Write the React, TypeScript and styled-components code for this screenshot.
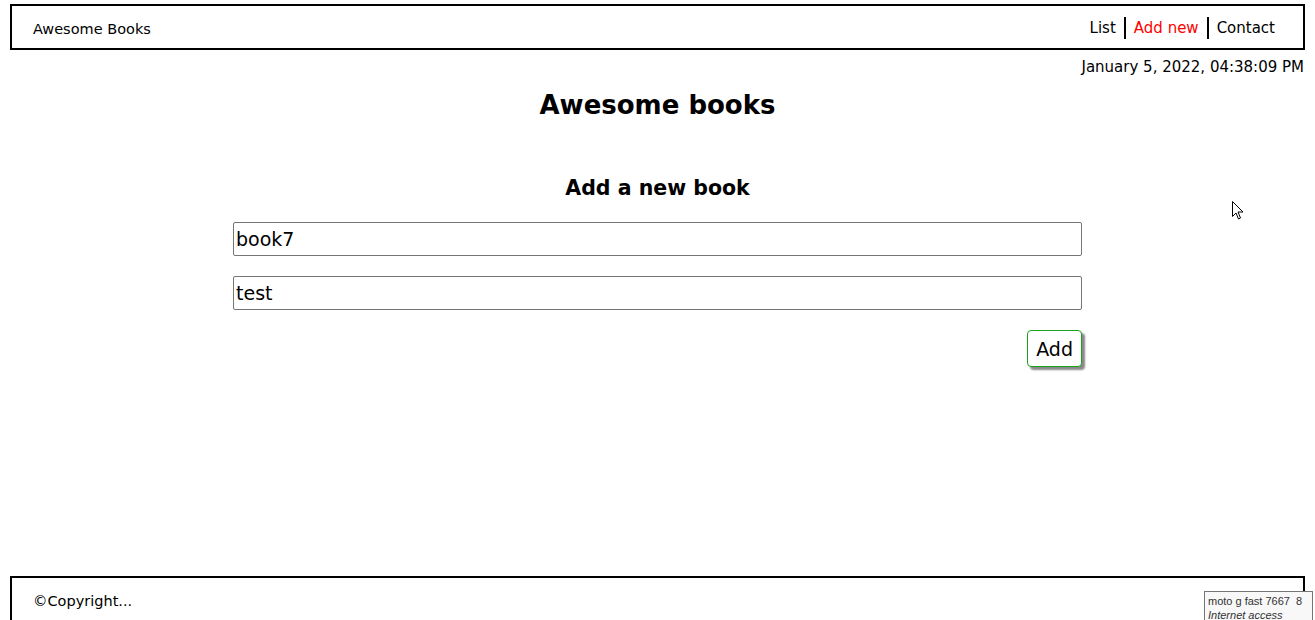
import React from 'react';
import styled, { createGlobalStyle } from 'styled-components';

const GlobalStyle = createGlobalStyle`
  html, body {
    margin: 0;
    padding: 0;
    background: #fff;
    overflow: hidden;
  }

  body {
    font-family: 'Comic Sans MS', 'DejaVu Sans', sans-serif;
    color: #000;
  }
`;

const Page = styled.div`
  height: 100vh;
  display: flex;
  flex-direction: column;
  padding: 4px 10px 0;
  box-sizing: border-box;
  position: relative;
`;

const Bar = styled.div`
  display: flex;
  align-items: center;
  justify-content: space-between;
  height: 46px;
  box-sizing: border-box;
  border: 2px solid #000;
  padding: 3px 28px 0 21px;
  font-size: 15px;
`;

const Brand = styled.span`
  font-size: 14.5px;
`;

const Nav = styled.nav`
  display: flex;
  align-items: center;
  margin-top: -1px;
`;

const NavLink = styled.a<{ $active?: boolean }>`
  color: ${(p) => (p.$active ? '#f00' : '#000')};
  text-decoration: none;
  padding: 0 8px;
  line-height: 22px;
  border-left: 2px solid #000;

  &:first-child {
    border-left: none;
  }

  &:last-child {
    padding-right: 0;
  }
`;

const Clock = styled.div`
  text-align: right;
  font-size: 15px;
  margin-top: 8px;
  padding-right: 1px;
`;

const Main = styled.main`
  flex: 1;
  display: flex;
  flex-direction: column;
  align-items: center;
`;

const Title = styled.h1`
  font-size: 26px;
  font-weight: bold;
  margin: 9px 0 0;
  line-height: 40px;
`;

const SubTitle = styled.h2`
  font-size: 20.5px;
  font-weight: bold;
  margin: 49px 0 0;
  line-height: 28px;
`;

const Form = styled.form`
  width: 849px;
  margin-top: 20px;
  display: flex;
  flex-direction: column;
  gap: 20px;
`;

const Input = styled.input`
  box-sizing: border-box;
  height: 34px;
  width: 100%;
  border: 1px solid #767676;
  border-radius: 2px;
  padding: 0 2px;
  font-family: inherit;
  font-size: 19px;
  color: #000;
  outline: none;
`;

const Actions = styled.div`
  display: flex;
  justify-content: flex-end;
`;

const AddButton = styled.button`
  height: 37px;
  padding: 0 8px;
  background: #fff;
  border: 1px solid #1aa31a;
  border-radius: 4px;
  box-shadow: 3px 3px 2px #888;
  font-family: inherit;
  font-size: 19px;
  color: #000;
  cursor: pointer;
`;

const Footer = styled(Bar)`
  margin-bottom: -2px;
`;

const Tooltip = styled.div`
  position: absolute;
  right: 2px;
  bottom: 0;
  width: 109px;
  height: 29px;
  box-sizing: border-box;
  border: 1px solid #767676;
  border-bottom: none;
  background: #f8f8f8;
  font-family: 'Liberation Sans', 'DejaVu Sans', sans-serif;
  font-size: 11px;
  color: #333;
  padding: 2px 3px;
  line-height: 14px;
  white-space: nowrap;

  em {
    font-style: italic;
  }
`;

const Cursor = styled.svg`
  position: absolute;
  left: 1232px;
  top: 201px;
`;

const App: React.FC = () => {
  return (
    <Page>
      <GlobalStyle />
      <Bar>
        <Brand>Awesome Books</Brand>
        <Nav>
          <NavLink href="#list">List</NavLink>
          <NavLink href="#add" $active>Add new</NavLink>
          <NavLink href="#contact">Contact</NavLink>
        </Nav>
      </Bar>
      <Clock>January 5, 2022, 04:38:09 PM</Clock>
      <Main>
        <Title>Awesome books</Title>
        <SubTitle>Add a new book</SubTitle>
        <Form onSubmit={(e) => e.preventDefault()}>
          <Input defaultValue="book7" />
          <Input defaultValue="test" />
          <Actions>
            <AddButton type="submit">Add</AddButton>
          </Actions>
        </Form>
      </Main>
      <Footer>
        <Brand>©Copyright...</Brand>
      </Footer>
      <Tooltip>
        moto g fast 7667&nbsp; 8
        <br />
        <em>Internet access</em>
      </Tooltip>
      <Cursor width="12" height="19" viewBox="0 0 12 19">
        <path d="M0.5 0.5 L0.5 15.5 L4 12 L6.5 18 L8.5 17 L6 11 L11 11 Z" fill="#fff" stroke="#000" strokeWidth="1" />
      </Cursor>
    </Page>
  );
};

export default App;
